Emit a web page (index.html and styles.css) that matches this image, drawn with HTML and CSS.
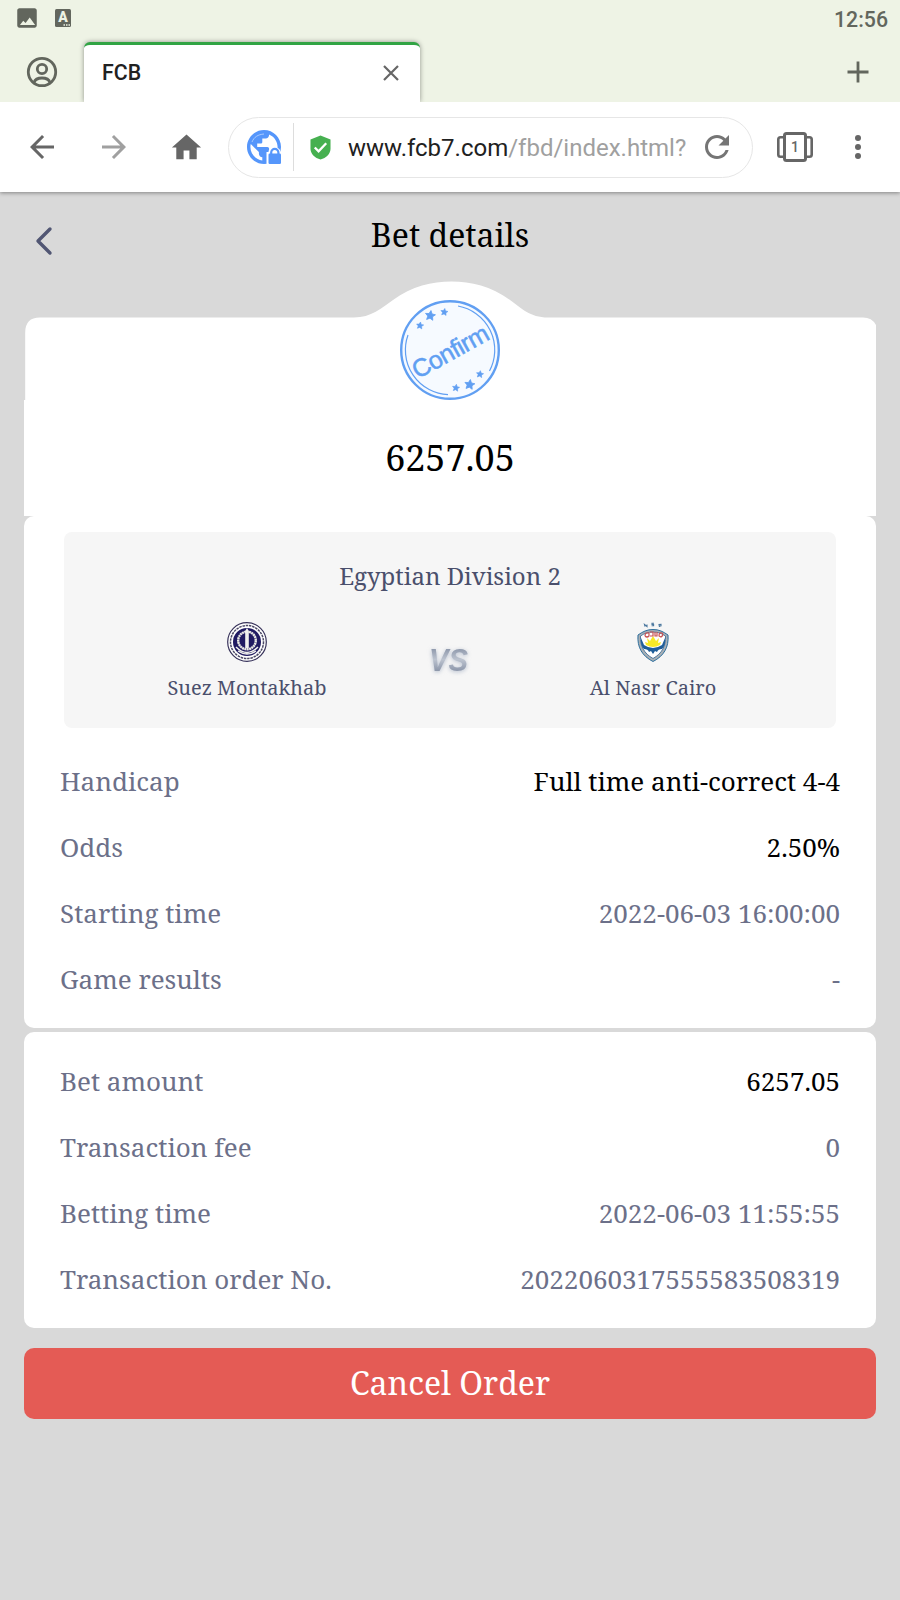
FILE: index.html
```
<!DOCTYPE html>
<html lang="en">
<head>
<meta charset="utf-8">
<title>FCB</title>
<link rel="stylesheet" href="styles.css">
</head>
<body>
<div class="chrome">
  <div class="status-bar">
    <svg class="status-image" viewBox="0 0 24 24"><path d="M21 19V5c0-1.100-.9-2-2-2H5c-1.100 0-2 .9-2 2v14c0 1.100.9 2 2 2h14c1.100 0 2-.9 2-2zM5.500 18.500l3-4 2.200 2 3.800-5 5 7z"/></svg>
    <svg class="status-letter" viewBox="0 0 16 18"><rect width="16" height="18" rx="1.500"/><text x="8" y="13" text-anchor="middle">A</text><path d="M8.500 15.200h1.500v1.500H8.500zM11 15.200h1.500v1.500H11zM13.500 15.200H15v1.500h-1.500z"/></svg>
    <span class="clock">12:56</span>
  </div>
  <div class="tab-strip">
    <svg class="account" viewBox="0 0 32 32"><circle cx="16" cy="16" r="13.700"/><circle cx="16" cy="13" r="4.700"/><path d="M8 26.500c2-6 14-6 16 0"/></svg>
    <div class="tab"><span>FCB</span><svg class="close" viewBox="0 0 16 16"><path d="M1 1l14 14M15 1L1 15"/></svg></div>
    <svg class="plus" viewBox="0 0 22 22"><path d="M11 .5v21M.5 11h21"/></svg>
  </div>
  <div class="toolbar">
    <svg class="nav-icon" viewBox="0 0 24 24"><path d="M20 11H7.830l5.590-5.590L12 4l-8 8 8 8 1.410-1.410L7.830 13H20v-2z"/></svg>
    <svg class="nav-icon forward" viewBox="0 0 24 24"><path d="M12 4l-1.410 1.410L16.170 11H4v2h12.170l-5.580 5.590L12 20l8-8z"/></svg>
    <svg class="home" viewBox="0 0 24 24"><path d="M10 20v-6h4v6h5v-8h3L12 3 2 12h3v8z"/></svg>
    <div class="address">
      <svg class="globe" viewBox="0 0 34 34">
        <path class="land" transform="translate(-3.400 -3.400) scale(1.700)" d="M12 2C6.480 2 2 6.480 2 12s4.480 10 10 10 10-4.480 10-10S17.520 2 12 2zm-1 17.930c-3.950-.49-7-3.850-7-7.930 0-.62.08-1.210.21-1.790L9 15v1c0 1.100.9 2 2 2v1.930zm6.900-2.540c-.26-.81-1-1.390-1.900-1.390h-1v-3c0-.55-.45-1-1-1H8v-2h2c.55 0 1-.45 1-1V7h2c1.100 0 2-.9 2-2v-.41c2.930 1.190 5 4.060 5 7.410 0 2.080-.8 3.970-2.100 5.390z"/>
        <path class="glint" d="M5 12C7 7 11 4.500 17 4"/>
        <path class="halo" d="M19.500 22h2c0-6.500 12-6.500 12 0h1.500v13H19.500z"/>
        <rect class="land" x="21.500" y="23.500" width="12.500" height="10.500" rx="1.200"/>
        <path class="shackle" d="M24.200 24.500v-2a3.600 3.600 0 0 1 7.200 0v2"/>
      </svg>
      <span class="divider"></span>
      <svg class="shield" viewBox="0 0 22 26"><path d="M11 .5L.5 4.500V14c0 5.500 4.500 10 10.500 11.500C17 24 21.500 19.500 21.500 14V4.500z"/><path class="tick" d="M5 13l4 4 8-8.500"/></svg>
      <span class="url">www.fcb7.com<i>/fbd/index.html?</i></span>
      <svg class="refresh" viewBox="0 0 24 24"><path d="M17.650 6.350C16.200 4.900 14.210 4 12 4c-4.420 0-7.990 3.580-7.990 8s3.570 8 7.990 8c3.730 0 6.840-2.550 7.730-6h-2.080c-.82 2.330-3.040 4-5.650 4-3.310 0-6-2.690-6-6s2.690-6 6-6c1.660 0 3.140.69 4.220 1.780L13 11h7V4l-2.350 2.350z"/></svg>
    </div>
    <svg class="tab-count" viewBox="0 0 36 30"><rect x="7.500" y="1.500" width="21" height="27" rx="2"/><path d="M7 5.300H3.500Q1.300 5.300 1.300 7.500V22.500Q1.300 24.700 3.500 24.700H7M29 5.300H32.500Q34.700 5.300 34.700 7.500V22.500Q34.700 24.700 32.500 24.700H29"/><text x="18" y="20" text-anchor="middle">1</text></svg>
    <svg class="menu" viewBox="0 0 6 24"><circle cx="3" cy="3" r="3"/><circle cx="3" cy="12" r="3"/><circle cx="3" cy="21" r="3"/></svg>
  </div>
</div>

<main class="page">
  <header class="page-header">
    <svg class="back" viewBox="0 0 16 28"><path d="M14 2L2 14l12 12"/></svg>
    <h1>Bet details</h1>
  </header>

  <section class="summary">
    <div class="summary-top">
      <svg class="hump" viewBox="0 0 852 119"><path d="M1.200 119V51.500Q1.200 36.500 16 36.500H330C347 36.500 358 27 369 19C388 5 408 .5 427.500 .5S467 5 486 19C497 27 506 36.500 524 36.500H839Q849 36.500 853 46V119z"/></svg>
      <svg class="stamp" viewBox="0 0 100 100">
        <circle cx="50" cy="50" r="48.800"/>
        <path class="arc" d="M8 35A44.700 44.700 0 0 0 48 94.700M58 6A44.700 44.700 0 0 1 89.500 71"/>
        <g class="stars">
          <path id="star" transform="translate(30.300 15.500) rotate(8)" d="M0-5l1.500 3.200 3.500.4-2.600 2.300.7 3.500L0 2.700-3.100 4.400l.7-3.500L-5-1.400l3.500-.4z"/>
          <use href="#star" transform="translate(-1.500 14.500) scale(.71)"/>
          <use href="#star" transform="translate(22.800 1) scale(.71)"/>
          <use href="#star" transform="translate(39.400 69)"/>
          <use href="#star" transform="translate(34.400 76.800) scale(.71)"/>
          <use href="#star" transform="translate(58.400 63.200) scale(.71)"/>
        </g>
        <text transform="translate(50.500 52) rotate(-29)" y="8" text-anchor="middle" textLength="84">Confirm</text>
      </svg>
    </div>
    <div class="amount">6257.05</div>
  </section>

  <section class="card">
    <div class="match">
      <div class="league">Egyptian Division 2</div>
      <div class="teams">
        <div class="team">
          <svg class="crest" viewBox="0 0 40 40">
            <circle cx="20" cy="20" r="19.300" fill="#fff" stroke="#37325a" stroke-width="1.200"/>
            <circle cx="20" cy="20" r="16.500" fill="none" stroke="#4b4865" stroke-width="1.500" stroke-dasharray="2.500 .8"/>
            <circle cx="20" cy="20" r="14" fill="#201a61"/>
            <circle cx="20" cy="18.500" r="8.800" fill="none" stroke="#e9e9e4" stroke-width="2.400" stroke-dasharray="2 .4"/>
            <path d="M9 25q11 11 22 0M11 29q9 6 18 0" fill="none" stroke="#f1f1ee" stroke-width="1.500"/>
            <path d="M18.200 9l1.800-3 1.800 3v17h-3.600z" fill="#f1f1ee"/>
          </svg>
          <div class="team-name">Suez Montakhab</div>
        </div>
        <svg class="versus" viewBox="0 0 44 34">
          <defs><linearGradient id="steel" x1="0" y1="0" x2="0" y2="1"><stop offset="0.2" stop-color="#8f99ac"/><stop offset=".5" stop-color="#bcc3cf"/><stop offset=".8" stop-color="#8f99ac"/></linearGradient></defs>
          <text x="1" y="28.500" textLength="39" lengthAdjust="spacingAndGlyphs">VS</text>
        </svg>
        <div class="team">
          <svg class="crest" viewBox="0 0 40 40">
            <g fill="none" stroke="#4c789f" stroke-width="1.100"><path d="M12 4.500l-.5-2 2.500 2 0-2M21 1.200h-2v1.300h1.600v1.300h-2M26.500 5l-.5-2.500 2-.2v1.500l-1.700.4"/></g>
            <path d="M20 7.500c6 0 10 2 15 5.500 1 12-4 21-15 26.500C9 34 4 25 5 13c5-3.500 9-5.500 15-5.500z" fill="#a9b0b5" stroke="#2d6f9e" stroke-width="1"/>
            <path d="M20 10c5 0 9 1.500 12.500 4 .5 10-3.500 17.500-12.500 22.500C11 31.500 7 24 7.500 14c3.500-2.500 7.500-4 12.500-4z" fill="#fff" stroke="#51799e" stroke-width="1"/>
            <path d="M8 16l3 7q9 6 18 0l3-7q1 7-3 11-4 0-5 3l-2-1-2 3-2-3-2 1q-1-3-5-3-4-4-3-11z" fill="#1f5e99"/>
            <path d="M13 23l-1-3 3 1-1-5 3 3 3-5 3 5 3-3-1 5 3-1-1 3q-7 4-14 0z" fill="#f7ea26"/>
            <path d="M12 14q0-4 4-3v3q-2 2-4 0m5-4h3v4h-3m5-4v4h2v-4m2 4q0-4 3-3 2 2-1 4z" fill="none" stroke="#c95252" stroke-width="1.200"/>
          </svg>
          <div class="team-name">Al Nasr Cairo</div>
        </div>
      </div>
    </div>
    <div class="row"><span>Handicap</span><b>Full time anti-correct 4-4</b></div>
    <div class="row"><span>Odds</span><b>2.50%</b></div>
    <div class="row"><span>Starting time</span><span>2022-06-03 16:00:00</span></div>
    <div class="row"><span>Game results</span><span>-</span></div>
  </section>

  <section class="card order">
    <div class="row"><span>Bet amount</span><b>6257.05</b></div>
    <div class="row"><span>Transaction fee</span><span>0</span></div>
    <div class="row"><span>Betting time</span><span>2022-06-03 11:55:55</span></div>
    <div class="row"><span>Transaction order No.</span><span>2022060317555583508319</span></div>
  </section>

  <button class="cancel">Cancel Order</button>
</main>
</body>
</html>
```
FILE: styles.css
```
* { box-sizing: border-box; }
body { margin: 0; min-height: 1600px; background: #d9d9d9; font-family: "Noto Serif", serif; }
svg { display: block; flex: none; overflow: visible; }

/* Browser chrome */
.chrome { position: relative; font-family: Roboto, sans-serif; background: #eef3e5; box-shadow: 0 1px 4px rgba(0,0,0,.4); }
.status-bar { display: flex; align-items: center; height: 36px; padding: 0 12px 0 14px; color: #62665d; }
.status-image { width: 26px; height: 26px; fill: #62665d; }
.status-letter { width: 16px; height: 18px; margin-left: 15px; fill: #62665d; }
.status-letter text { font: 900 14px Roboto, sans-serif; fill: #edf3e4; }
.status-letter path { fill: #edf3e4; }
.clock { margin-left: auto; padding-top: 2px; font-size: 21.300px; font-weight: 500; }
.tab-strip { display: flex; height: 66px; padding: 6px 31px 0 26px; }
.account { width: 32px; height: 32px; margin: 14px 26px 0 0; fill: none; stroke: #62665d; stroke-width: 2.800; }
.tab { display: flex; align-items: center; justify-content: space-between; width: 336px; height: 60px; padding: 0 21px 2px 18px; border-top: 3px solid #31a444; border-radius: 6px 6px 0 0; background: #fff; box-shadow: 0 0 5px rgba(0,0,0,.4); font-size: 21.300px; font-weight: 500; color: #212121; }
.close { width: 16px; height: 16px; fill: none; stroke: #666; stroke-width: 2.200; }
.plus { width: 22px; height: 22px; margin: 19px 0 0 auto; fill: none; stroke: #62665d; stroke-width: 2.800; }
.toolbar { position: relative; display: flex; align-items: center; height: 90px; padding-left: 24px; background: #fff; }
.nav-icon { width: 36px; height: 36px; fill: #666; }
.forward { margin-left: 36px; fill: #a0a0a0; }
.home { width: 35px; height: 35px; margin: 1px 24px 0 37px; fill: #666; }
.address { display: flex; align-items: center; width: 525px; height: 61px; margin-left: 0; padding-left: 18px; border: 1.500px solid #e6e6e6; border-radius: 31px; }
.globe { width: 34px; height: 34px; }
.land { fill: #5596fb; }
.glint { fill: none; stroke: #a9caff; stroke-width: 1; }
.halo { fill: #fff; }
.shackle { fill: none; stroke: #5596fb; stroke-width: 2.200; }
.divider { width: 1px; height: 48px; margin-left: 12px; background: #ddd; }
.shield { width: 21px; height: 25px; margin: 0 17px 0 16px; fill: #46b050; }
.tick { fill: none; stroke: #fff; stroke-width: 2.400; }
.url { width: 351px; padding-top: 1px; font-size: 24px; color: #212121; white-space: nowrap; }
.url i { font-style: normal; color: #a0a0a0; }
.refresh { width: 36px; height: 36px; fill: #757575; }
.tab-count { width: 36px; height: 30px; margin-left: 24px; fill: none; stroke: #666; stroke-width: 3; }
.tab-count path { stroke-width: 2.600; }
.tab-count text { font: 500 14px Roboto, sans-serif; fill: #666; stroke: none; }
.menu { width: 6px; height: 24px; margin-left: 42px; fill: #666; }

/* Bet page */
.page { padding: 0 24px; }
.page-header { display: grid; grid-template-columns: 100px 1fr 100px; height: 86px; align-items: center; }
.page-header h1 { margin: 0; font-size: 32px; line-height: 86px; font-weight: 400; text-align: center; }
.back { width: 16px; height: 28px; margin: 12px 0 0 11.500px; fill: none; stroke: #515673; stroke-width: 3.400; stroke-linecap: round; stroke-linejoin: round; }
.summary { padding-top: 3px; }
.summary-top { display: grid; height: 119px; overflow: hidden; }
.hump, .stamp { grid-area: 1 / 1; }
.hump { width: 852px; height: 119px; fill: #fff; }
.stamp { width: 100px; height: 100px; margin: 19px auto 0; fill: #f6faff; stroke: #619ff2; stroke-width: 2.400; }
.stamp .arc { fill: none; stroke-width: 1.200; }
.stamp .stars { fill: #619ff2; stroke: #619ff2; stroke-width: .8; }
.stamp text { font: 25px "Liberation Sans", sans-serif; fill: #619ff2; stroke: #619ff2; stroke-width: .5; }
.amount { height: 116px; background: #fff; line-height: 116px; font-size: 36px; text-align: center; }
.card { padding: 16px 36px; background: #fff; border-radius: 10px; }
.match { height: 196px; margin: 0 4px 20px; padding-top: 26px; border-radius: 8px; background: #f6f6f6; color: #4a4f6c; }
.league { font-size: 24px; line-height: 36px; text-align: center; }
.teams { display: grid; grid-template-columns: 306px 100px 306px; justify-content: center; justify-items: center; padding-top: 28px; }
.crest { width: 40px; height: 40px; margin: 0 auto; }
.team-name { padding-top: 11px; font-size: 20px; line-height: 30px; text-align: center; }
.versus { width: 44px; height: 34px; margin-top: 20px; }
.versus text { font: italic bold 32px "Liberation Sans", sans-serif; fill: url(#steel); filter: drop-shadow(0 1px 2px rgba(140,155,180,.6)); }
.row { display: flex; justify-content: space-between; height: 66px; line-height: 66px; font-size: 26px; color: #6c7089; white-space: nowrap; }
.row b { font-weight: 400; color: #000; }
.order { margin-top: 4px; }
.cancel { display: block; width: 100%; height: 71px; margin-top: 20px; padding: 0 0 2px; border: 0; border-radius: 10px; background: #e45b55; color: #fff; font: 32px "Noto Serif", serif; }
```
